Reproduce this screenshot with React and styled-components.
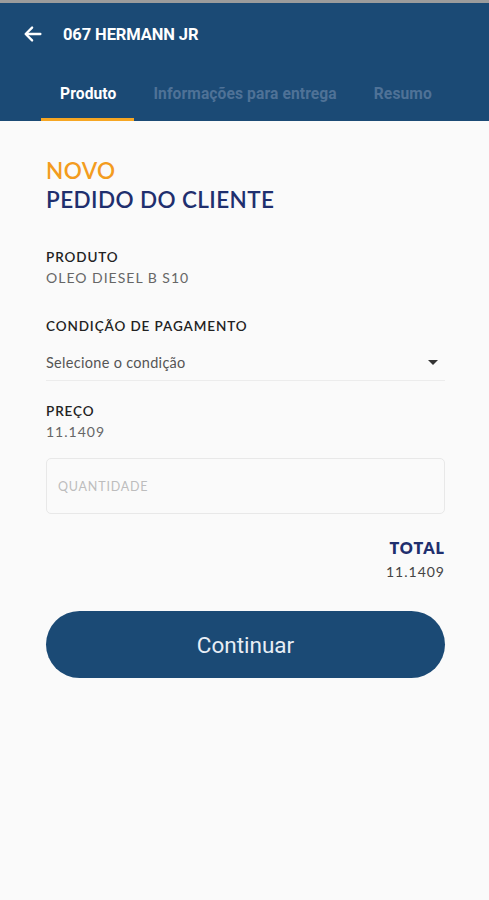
import styled, { createGlobalStyle } from 'styled-components';

const GlobalStyle = createGlobalStyle`
  html, body {
    margin: 0;
    padding: 0;
    background: #fafafa;
  }
  body {
    font-family: Lato, "Open Sans", sans-serif;
  }
`;

const Screen = styled.div`
  width: 489px;
  min-height: 900px;
  background: #fafafa;
  border-top: 3px solid #9c9c9c;
  box-sizing: border-box;
`;

const Header = styled.header`
  background: #1b4a75;
  height: 118px;
  display: flex;
  flex-direction: column;
`;

const TopBar = styled.div`
  display: flex;
  align-items: center;
  height: 62px;
  padding-left: 22px;
  gap: 19px;
`;

const HeaderTitle = styled.h1`
  margin: 0;
  color: #fff;
  font-family: Roboto, sans-serif;
  font-size: 16.5px;
  font-weight: 700;
  letter-spacing: -0.1px;
`;

const Tabs = styled.nav`
  display: flex;
  margin-top: auto;
  padding-left: 41px;
`;

const Tab = styled.div`
  height: 55px;
  padding: 3px 18px 0 19px;
  display: flex;
  align-items: center;
  box-sizing: border-box;
  font-family: Roboto, sans-serif;
  font-size: 15.6px;
  font-weight: 700;
  letter-spacing: 0.1px;
  color: ${({ active }) => (active ? '#ffffff' : '#4f7297')};
  border-bottom: 3px solid ${({ active }) => (active ? '#f6a623' : 'transparent')};
`;

const Content = styled.main`
  padding: 35px 44px 0 46px;
  display: flex;
  flex-direction: column;
`;

const Kicker = styled.div`
  color: #f39c1e;
  font-size: 22.5px;
  font-weight: 600;
  line-height: 29px;
  letter-spacing: 0.4px;
`;

const PageTitle = styled.h2`
  margin: 0;
  color: #1f2f6e;
  font-size: 22.5px;
  font-weight: 600;
  line-height: 29px;
  letter-spacing: 0.4px;
`;

const Field = styled.div`
  margin-top: ${({ gap }) => gap}px;
  display: flex;
  flex-direction: column;
`;

const Label = styled.div`
  color: #222;
  font-size: 13.5px;
  font-weight: 600;
  line-height: 20px;
  letter-spacing: 0.9px;
`;

const Value = styled.div`
  color: #666;
  font-size: 14px;
  line-height: 22px;
  letter-spacing: 1px;
`;

const Select = styled.div`
  margin-top: 8px;
  height: 36px;
  display: flex;
  align-items: center;
  justify-content: space-between;
  border-bottom: 1px solid #ececec;
  color: #555;
  font-size: 14.5px;
  letter-spacing: 0.3px;
  padding-right: 7px;
`;

const Caret = styled.span`
  width: 0;
  height: 0;
  border-left: 5px solid transparent;
  border-right: 5px solid transparent;
  border-top: 5px solid #333;
`;

const Input = styled.div`
  margin-top: 15px;
  height: 56px;
  border: 1px solid #e8e8e8;
  border-radius: 5px;
  box-sizing: border-box;
  display: flex;
  align-items: center;
  padding-left: 11px;
  color: #bdbdbd;
  font-size: 12.5px;
  letter-spacing: 0.8px;
`;

const Totals = styled.div`
  margin-top: 23px;
  display: flex;
  flex-direction: column;
  align-items: flex-end;
`;

const TotalLabel = styled.div`
  color: #1f2f6e;
  font-size: 16px;
  font-weight: 800;
  line-height: 22px;
  letter-spacing: 1px;
`;

const TotalValue = styled.div`
  color: #444;
  font-size: 14px;
  line-height: 26px;
  letter-spacing: 1px;
`;

const Button = styled.button`
  margin-top: 26px;
  height: 67px;
  border: none;
  border-radius: 34px;
  background: #1b4a75;
  color: #e8eef5;
  font-family: Roboto, sans-serif;
  font-size: 22.5px;
  cursor: pointer;
`;

const BackArrow = () => (
  <svg width="22" height="22" viewBox="0 0 24 24" fill="none" stroke="#fff" strokeWidth="2.6" strokeLinecap="round" strokeLinejoin="round">
    <path d="M20 12H5" />
    <path d="M11 5l-7 7 7 7" />
  </svg>
);

export default function App() {
  return (
    <Screen>
      <GlobalStyle />
      <Header>
        <TopBar>
          <BackArrow />
          <HeaderTitle>067 HERMANN JR</HeaderTitle>
        </TopBar>
        <Tabs>
          <Tab active>Produto</Tab>
          <Tab>Informações para entrega</Tab>
          <Tab>Resumo</Tab>
        </Tabs>
      </Header>
      <Content>
        <Kicker>NOVO</Kicker>
        <PageTitle>PEDIDO DO CLIENTE</PageTitle>

        <Field gap={33}>
          <Label>PRODUTO</Label>
          <Value>OLEO DIESEL B S10</Value>
        </Field>

        <Field gap={27}>
          <Label>CONDIÇÃO DE PAGAMENTO</Label>
          <Select>
            Selecione o condição
            <Caret />
          </Select>
        </Field>

        <Field gap={20}>
          <Label>PREÇO</Label>
          <Value>11.1409</Value>
        </Field>

        <Input>QUANTIDADE</Input>

        <Totals>
          <TotalLabel>TOTAL</TotalLabel>
          <TotalValue>11.1409</TotalValue>
        </Totals>

        <Button>Continuar</Button>
      </Content>
    </Screen>
  );
}
